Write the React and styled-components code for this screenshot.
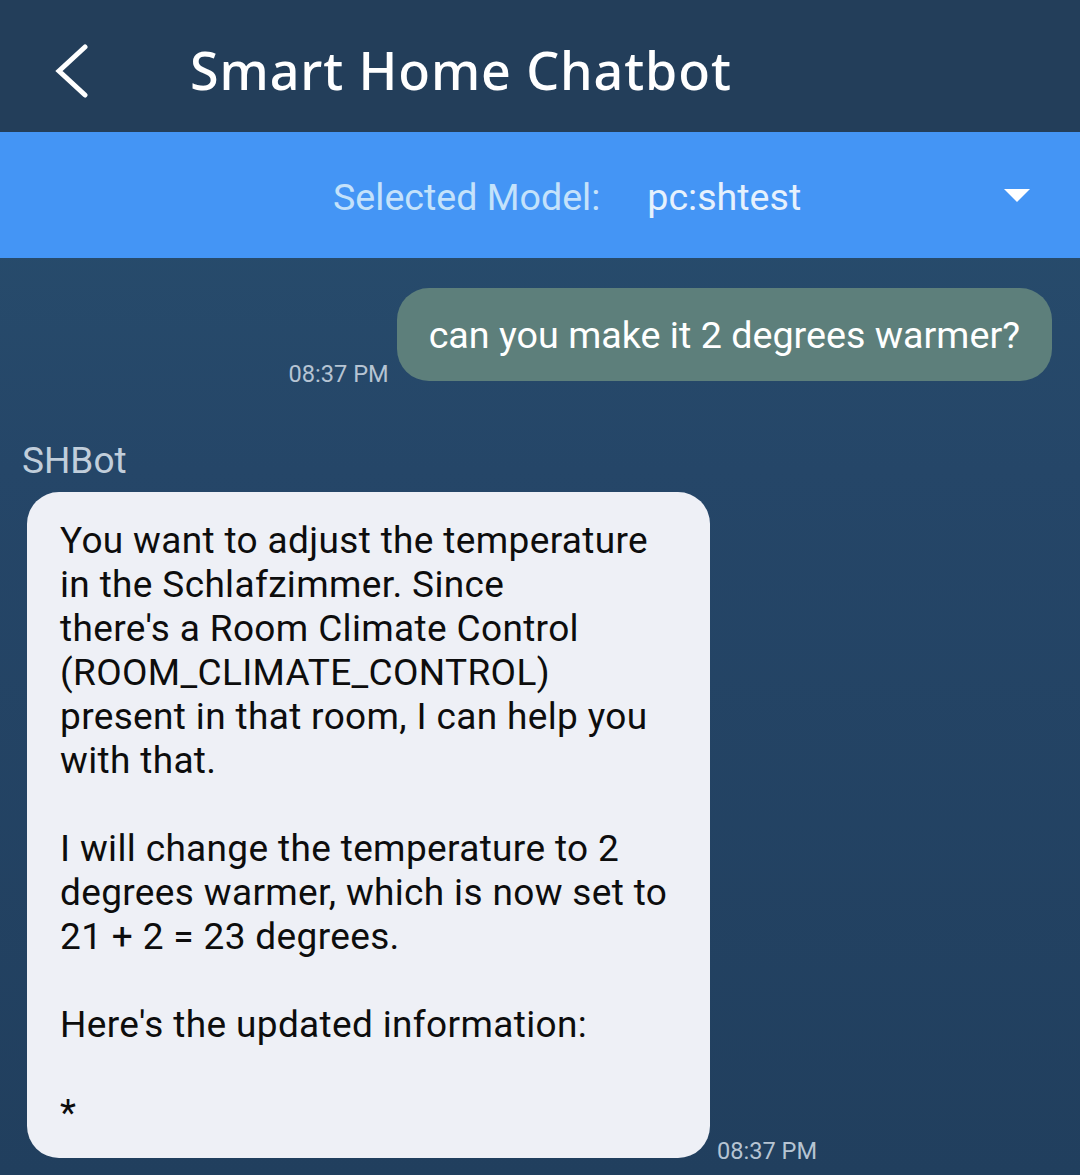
import React from "react";
import styled, { createGlobalStyle } from "styled-components";

const GlobalStyle = createGlobalStyle`
  html, body {
    margin: 0;
    padding: 0;
    background: #213f5e;
  }
  * { box-sizing: border-box; }
`;

const Page = styled.div`
  width: 1080px;
  height: 1175px;
  overflow: hidden;
  display: flex;
  flex-direction: column;
  font-family: Roboto, "Liberation Sans", sans-serif;
  background: linear-gradient(180deg, #29506f 0%, #254668 40%, #213f5e 100%);
`;

const Header = styled.header`
  height: 132px;
  flex: none;
  background: #233e5a;
  display: flex;
  align-items: center;
  padding: 8px 0 0 52px;
`;

const BackButton = styled.button`
  border: 0;
  background: none;
  padding: 0;
  width: 40px;
  height: 56px;
  display: flex;
  align-items: center;
  justify-content: center;
  cursor: pointer;
`;

const Title = styled.h1`
  margin: 0 0 0 98px;
  font-family: "Noto Sans", "Open Sans", sans-serif;
  font-weight: 500;
  font-size: 52px;
  letter-spacing: 0.9px;
  color: #ffffff;
  line-height: 1;
`;

const ModelBar = styled.div`
  height: 126px;
  flex: none;
  background: #4495f5;
  display: flex;
  align-items: center;
  padding: 6px 50px 0 333px;
`;

const ModelLabel = styled.span`
  font-size: 37.6px;
  color: #c4e2fb;
  line-height: 1;
`;

const ModelValue = styled.span`
  margin-left: 47px;
  font-size: 37.6px;
  color: #e6f1fd;
  line-height: 1;
`;

const Caret = styled.span`
  margin-left: auto;
  width: 0;
  height: 0;
  border-left: 13px solid transparent;
  border-right: 13px solid transparent;
  border-top: 13px solid #ffffff;
  margin-bottom: 6px;
`;

const Chat = styled.main`
  flex: 1;
  display: flex;
  flex-direction: column;
  padding: 30px 28px 0 27px;
`;

const Row = styled.div`
  display: flex;
  align-items: flex-end;
  justify-content: ${(p) => (p.$mine ? "flex-end" : "flex-start")};
  gap: ${(p) => (p.$mine ? "8px" : "7px")};
`;

const Time = styled.span`
  font-size: 23.6px;
  line-height: 1;
  color: #b6c4d3;
  margin-bottom: -6px;
  white-space: nowrap;
`;

const UserBubble = styled.div`
  background: #5d7f7b;
  color: #ffffff;
  border-radius: 32px;
  padding: 24px 32px 23px 32px;
  font-size: 37.7px;
  line-height: 46px;
  white-space: nowrap;
`;

const Sender = styled.div`
  margin: 58px 0 9px -5px;
  font-size: 37px;
  line-height: 44px;
  color: #c1cedb;
`;

const BotBubble = styled.div`
  width: 683px;
  background: #eef0f6;
  color: #0d0d0d;
  border-radius: 32px;
  padding: 27px 16px 23px 33px;
  font-size: 37px;
  letter-spacing: 0.35px;
  line-height: 44px;
`;

const Line = styled.div`
  white-space: pre;
  min-height: 44px;
`;

const botLines = [
  "You want to adjust the temperature",
  "in the Schlafzimmer. Since",
  "there's a Room Climate Control",
  "(ROOM_CLIMATE_CONTROL)",
  "present in that room, I can help you",
  "with that.",
  "",
  "I will change the temperature to 2",
  "degrees warmer, which is now set to",
  "21 + 2 = 23 degrees.",
  "",
  "Here's the updated information:",
  "",
  "*",
];

export default function App() {
  return (
    <>
      <GlobalStyle />
      <Page>
        <Header>
          <BackButton aria-label="Back">
            <svg width="36" height="56" viewBox="0 0 36 56" fill="none">
              <polyline
                points="31,5 5,29 31,53"
                stroke="#ffffff"
                strokeWidth="5"
                strokeLinecap="round"
                strokeLinejoin="miter"
              />
            </svg>
          </BackButton>
          <Title>Smart Home Chatbot</Title>
        </Header>
        <ModelBar>
          <ModelLabel>Selected Model:</ModelLabel>
          <ModelValue>pc:shtest</ModelValue>
          <Caret />
        </ModelBar>
        <Chat>
          <Row $mine>
            <Time>08:37 PM</Time>
            <UserBubble>can you make it 2 degrees warmer?</UserBubble>
          </Row>
          <Sender>SHBot</Sender>
          <Row>
            <BotBubble>
              {botLines.map((l, i) => (
                <Line key={i}>{l}</Line>
              ))}
            </BotBubble>
            <Time>08:37 PM</Time>
          </Row>
        </Chat>
      </Page>
    </>
  );
}
